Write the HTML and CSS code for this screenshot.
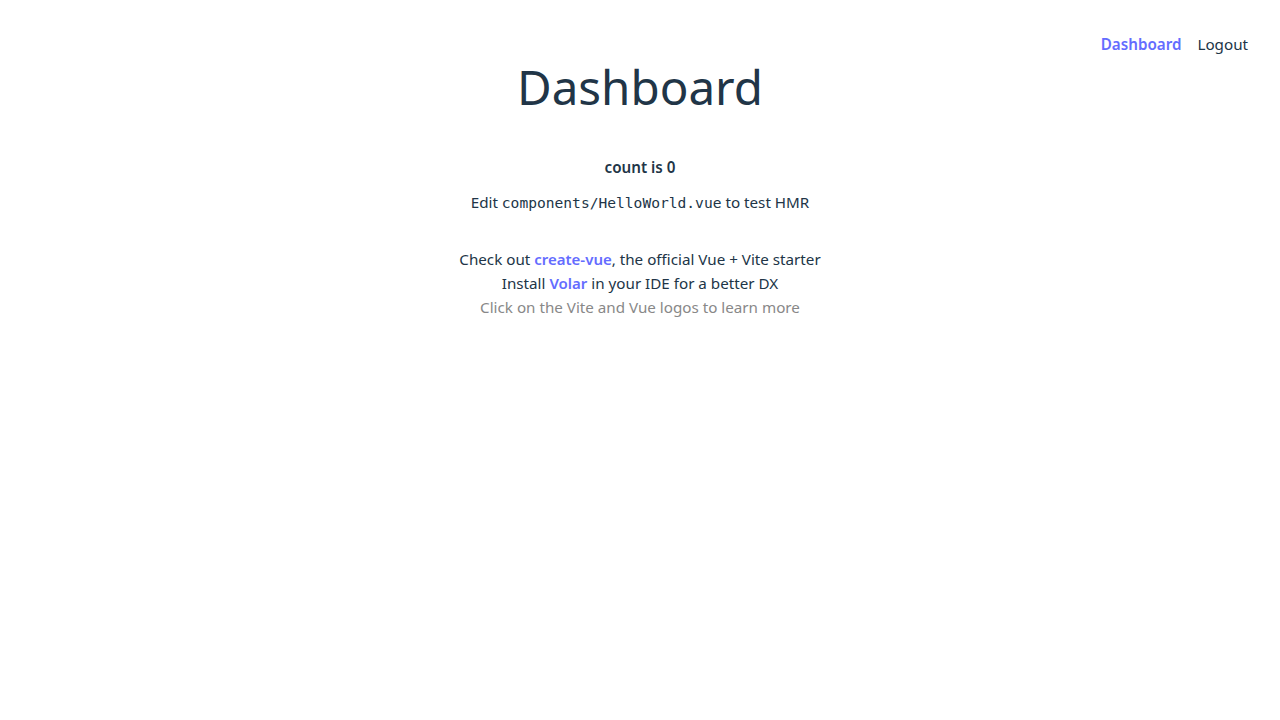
FILE: index.html
```html
<!DOCTYPE html>
<html lang="en">
<head>
<meta charset="utf-8">
<title>Dashboard</title>
<link rel="stylesheet" href="styles.css">
</head>
<body>
<div class="app">
  <header class="topbar">
    <nav class="nav">
      <a class="nav-link active" href="#">Dashboard</a>
      <a class="nav-link" href="#">Logout</a>
    </nav>
  </header>
  <main class="main">
    <h1 class="title">Dashboard</h1>
    <div class="card">
      <button class="counter" type="button">count is 0</button>
      <p class="edit">Edit <code class="code">components/HelloWorld.vue</code> to test HMR</p>
    </div>
    <p class="info">Check out <a class="link" href="#">create-vue</a>, the official Vue + Vite starter</p>
    <p class="info">Install <a class="link" href="#">Volar</a> in your IDE for a better DX</p>
    <p class="info muted">Click on the Vite and Vue logos to learn more</p>
  </main>
</div>
</body>
</html>
```
FILE: styles.css
```css
* { box-sizing: border-box; }
html, body { margin: 0; padding: 0; background: #ffffff; }
body {
  font-family: "Noto Sans", "Open Sans", sans-serif;
  font-size: 15.2px;
  line-height: 24px;
  color: #213547;
}
.app { width: 1280px; }
.topbar {
  display: flex;
  justify-content: flex-end;
  padding: 32px 32px 0 0;
}
.nav { display: flex; gap: 16px; }
.nav-link {
  color: #213547;
  text-decoration: none;
  line-height: 24px;
}
.nav-link.active { color: #646cff; font-weight: 600; }
.main {
  display: flex;
  flex-direction: column;
  align-items: center;
  text-align: center;
}
.title {
  margin: 3px 0 0;
  font-size: 47.5px;
  line-height: 56px;
  font-weight: 400;
  color: #213547;
}
.card {
  padding-top: 40px;
  display: flex;
  flex-direction: column;
  align-items: center;
}
.counter {
  font-family: inherit;
  font-size: 15.2px;
  line-height: 24px;
  font-weight: 600;
  color: #213547;
  background: transparent;
  border: 0;
  padding: 0;
}
.edit { margin: 11px 0 0; }
.code {
  font-family: "DejaVu Sans Mono", "Liberation Mono", monospace;
  font-size: 14.6px;
}
.info { margin: 0; }
.card + .info { margin-top: 32px; }
.link { color: #646cff; font-weight: 600; font-size: 15px; text-decoration: none; }
.muted { color: #888888; }
```
